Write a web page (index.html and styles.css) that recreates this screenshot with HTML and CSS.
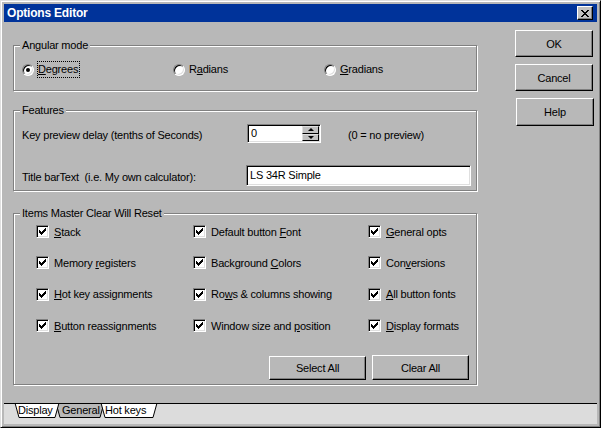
FILE: index.html
```html
<!DOCTYPE html>
<html lang="en">
<head>
    <meta charset="UTF-8">
    <title>Options Editor</title>
    <link rel="stylesheet" href="styles.css">
</head>
<body>
<div class="window">
    <div class="titlebar">
        <span class="title">Options Editor</span>
        <span class="close">
            <svg width="8" height="7" viewBox="0 0 8 7" shape-rendering="crispEdges">
                <path d="M0 0h2v1h-2zM6 0h2v1h-2zM1 1h2v1h-2zM5 1h2v1h-2zM2 2h4v1h-4zM3 3h2v1h-2zM2 4h4v1h-4zM1 5h2v1h-2zM5 5h2v1h-2zM0 6h2v1h-2zM6 6h2v1h-2z" fill="#000"/>
            </svg>
        </span>
    </div>

    <div class="main">
        <div class="panels">
            <div class="group angular">
                <span class="group-title">Angular mode</span>
                <label class="radio checked"><span class="circle"></span><span class="radio-text focused"><u>D</u>egrees</span></label>
                <label class="radio"><span class="circle"></span><span class="radio-text">R<u>a</u>dians</span></label>
                <label class="radio"><span class="circle"></span><span class="radio-text"><u>G</u>radians</span></label>
            </div>

            <div class="group features">
                <span class="group-title">Features</span>
                <div class="field-row">
                    <span class="field-label">Key preview delay (tenths of Seconds)</span>
                    <div class="spin">
                        <span class="spin-value">0</span>
                        <span class="spin-btns">
                            <span class="spin-btn"><span class="arrow-up"></span></span>
                            <span class="spin-btn"><span class="arrow-down"></span></span>
                        </span>
                    </div>
                    <span class="hint">(0 = no preview)</span>
                </div>
                <div class="field-row">
                    <span class="field-label">Title barText&nbsp; (i.e. My own calculator):</span>
                    <div class="textbox">LS 34R Simple</div>
                </div>
            </div>

            <div class="group items">
                <span class="group-title">Items Master Clear Will Reset</span>
                <div class="check-grid">
                    <label class="check"><span class="box"></span><span><u>S</u>tack</span></label>
                    <label class="check"><span class="box"></span><span>Default button <u>F</u>ont</span></label>
                    <label class="check"><span class="box"></span><span><u>G</u>eneral opts</span></label>

                    <label class="check"><span class="box"></span><span>Memory <u>r</u>egisters</span></label>
                    <label class="check"><span class="box"></span><span>Background <u>C</u>olors</span></label>
                    <label class="check"><span class="box"></span><span>Con<u>v</u>ersions</span></label>

                    <label class="check"><span class="box"></span><span><u>H</u>ot key assignments</span></label>
                    <label class="check"><span class="box"></span><span>Ro<u>w</u>s &amp; columns showing</span></label>
                    <label class="check"><span class="box"></span><span><u>A</u>ll button fonts</span></label>

                    <label class="check"><span class="box"></span><span><u>B</u>utton reassignments</span></label>
                    <label class="check"><span class="box"></span><span>Window size and <u>p</u>osition</span></label>
                    <label class="check"><span class="box"></span><span><u>D</u>isplay formats</span></label>
                </div>
                <div class="actions">
                    <button class="btn btn-select">Select All</button>
                    <button class="btn">Clear All</button>
                </div>
            </div>
        </div>

        <div class="side">
            <button class="btn">OK</button>
            <button class="btn">Cancel</button>
            <button class="btn btn-help">Help</button>
        </div>
    </div>

    <div class="tabstrip">
        <svg width="200" height="20" viewBox="0 0 200 20">
            <path d="M52 -1 L56 13.5 L96 13.5 L100 -1" fill="#b8b8b8" stroke="#000"/>
            <path d="M11 -1 L15 13.5 L51 13.5 L55 -1" fill="#fff" stroke="#000"/>
            <path d="M97 -1 L101 13.5 L149 13.5 L153 -1" fill="#fff" stroke="#000"/>
            <text x="14" y="10">Display</text>
            <text x="58" y="10">General</text>
            <text x="101" y="10">Hot keys</text>
        </svg>
    </div>
</div>
</body>
</html>
```

FILE: styles.css
```css
/* Win95 style dialog */
body {
    margin: 0;
    font-family: "Liberation Sans", Arial, sans-serif;
    font-size: 11px;
    letter-spacing: -0.2px;
    color: #000;
    background: #b8b8b8;
}

.window {
    width: 601px;
    height: 428px;
    box-sizing: border-box;
    border: 1px solid;
    border-color: #dfdfdf #000 #000 #dfdfdf;
    box-shadow: inset 1px 1px #fff, inset -1px -1px #808080;
    padding: 3px;
    display: flex;
    flex-direction: column;
    background: #b8b8b8;
}

.titlebar {
    height: 18px;
    flex: none;
    background: #00339a;
    color: #fff;
    display: flex;
    align-items: center;
    justify-content: space-between;
    padding: 0 4px 0 3px;
    font-weight: bold;
    font-size: 12px;
}

.close {
    width: 16px;
    height: 14px;
    box-sizing: border-box;
    background: #c0c0c0;
    border: 1px solid;
    border-color: #fff #000 #000 #fff;
    box-shadow: inset -1px -1px #808080;
    display: flex;
    align-items: center;
    justify-content: center;
}

.main {
    flex: 1;
    display: flex;
    align-items: flex-start;
    padding-left: 9px;
}

.panels {
    width: 464px;
    margin-top: 23px;
}

.side {
    margin-left: 38px;
    margin-top: 8px;
    display: flex;
    flex-direction: column;
    align-items: flex-start;
}

.btn {
    font: inherit;
    letter-spacing: inherit;
    color: #000;
    box-sizing: border-box;
    background: transparent;
    border: 1px solid;
    border-color: #fff #000 #000 #fff;
    box-shadow: inset -1px -1px #808080;
    padding: 0;
}

.side .btn {
    width: 78px;
    height: 27px;
}

.side .btn + .btn {
    margin-top: 7px;
}

.side .btn-help {
    margin-top: 9px;
    margin-left: 1px;
    height: 28px;
}

/* group boxes */
.group {
    position: relative;
    border: 1px solid #808080;
    box-shadow: inset 1px 1px #fff, 1px 1px #fff;
}

.group-title {
    position: absolute;
    top: -8px;
    left: 6px;
    padding: 0 2px;
    line-height: 14px;
    background: #b8b8b8;
}

.angular {
    display: flex;
    padding: 15px 0 12px 8px;
}

.features {
    margin-top: 19px;
    padding: 13px 0 4px 8px;
}

.items {
    margin-top: 22px;
    padding: 2px 7px 4px 22px;
}

/* radios */
.radio {
    width: 151px;
    height: 17px;
    display: flex;
    align-items: center;
}

.circle {
    width: 12px;
    height: 12px;
    box-sizing: border-box;
    border-radius: 50%;
    background: #fff;
    border: 1px solid;
    border-color: #808080 #fff #fff #808080;
    box-shadow: inset 1px 1px #000, inset -1px -1px #dfdfdf;
    display: flex;
    align-items: center;
    justify-content: center;
}

.checked .circle::after {
    content: "";
    width: 4px;
    height: 4px;
    border-radius: 50%;
    background: #000;
}

.radio-text {
    margin-left: 3px;
    border: 1px dotted transparent;
    padding: 0 1px 0 0;
    line-height: 15px;
}

.radio-text.focused {
    border-color: #000;
}

/* features */
.field-row {
    display: flex;
    align-items: center;
}

.field-row + .field-row {
    margin-top: 22px;
}

.field-label {
    width: 225px;
    padding-top: 2px;
}

.spin,
.textbox {
    box-sizing: border-box;
    background: #fff;
    border: 1px solid;
    border-color: #808080 #fff #fff #808080;
    box-shadow: inset 1px 1px #000, inset -1px -1px #dfdfdf;
}

.spin {
    width: 74px;
    height: 19px;
    display: flex;
    padding: 1px;
}

.spin-value {
    flex: 1;
    padding-left: 2px;
    line-height: 15px;
}

.spin-btns {
    width: 17px;
    display: flex;
    flex-direction: column;
}

.spin-btn {
    flex: 1;
    box-sizing: border-box;
    background: #c0c0c0;
    border: 1px solid;
    border-color: #dfdfdf #000 #000 #dfdfdf;
    display: flex;
    align-items: center;
    justify-content: center;
}

.arrow-up,
.arrow-down {
    width: 0;
    height: 0;
    border-left: 3px solid transparent;
    border-right: 3px solid transparent;
}

.arrow-up {
    border-bottom: 3px solid #000;
}

.arrow-down {
    border-top: 3px solid #000;
}

.hint {
    margin-left: 27px;
    padding-top: 2px;
}

.textbox {
    width: 225px;
    height: 21px;
    margin-left: -1px;
    padding-left: 3px;
    line-height: 19px;
}

/* checkboxes */
.check-grid {
    display: grid;
    grid-template-columns: 157px 175px 1fr;
    grid-auto-rows: 31.33px;
}

.check {
    display: flex;
    align-items: center;
}

.box {
    width: 13px;
    height: 13px;
    flex: none;
    box-sizing: border-box;
    margin-right: 5px;
    background: #fff;
    border: 1px solid;
    border-color: #808080 #fff #fff #808080;
    box-shadow: inset 1px 1px #000, inset -1px -1px #dfdfdf;
    background-image: url("data:image/svg+xml,%3Csvg xmlns='http://www.w3.org/2000/svg' width='7' height='7' shape-rendering='crispEdges'%3E%3Cpath d='M6 0h1v1h-1zM5 1h2v1h-2zM0 2h1v1h-1zM4 2h3v1h-3zM0 3h2v1h-2zM3 3h3v1h-3zM0 4h5v1h-5zM1 5h3v1h-3zM2 6h1v1h-1z'/%3E%3C/svg%3E");
    background-repeat: no-repeat;
    background-position: 2px 2px;
}

.actions {
    display: flex;
    justify-content: flex-end;
    gap: 6px;
    margin-top: 14px;
}

.actions .btn {
    width: 97px;
    height: 25px;
}

.actions .btn-select {
    margin-top: 1px;
    height: 24px;
}

/* sheet tabs */
.tabstrip {
    height: 20px;
    flex: none;
    border-top: 1px solid #000;
    background: #dcdcdc;
}

.tabstrip svg {
    display: block;
    font-family: "Liberation Sans", Arial, sans-serif;
    font-size: 11px;
}
```
